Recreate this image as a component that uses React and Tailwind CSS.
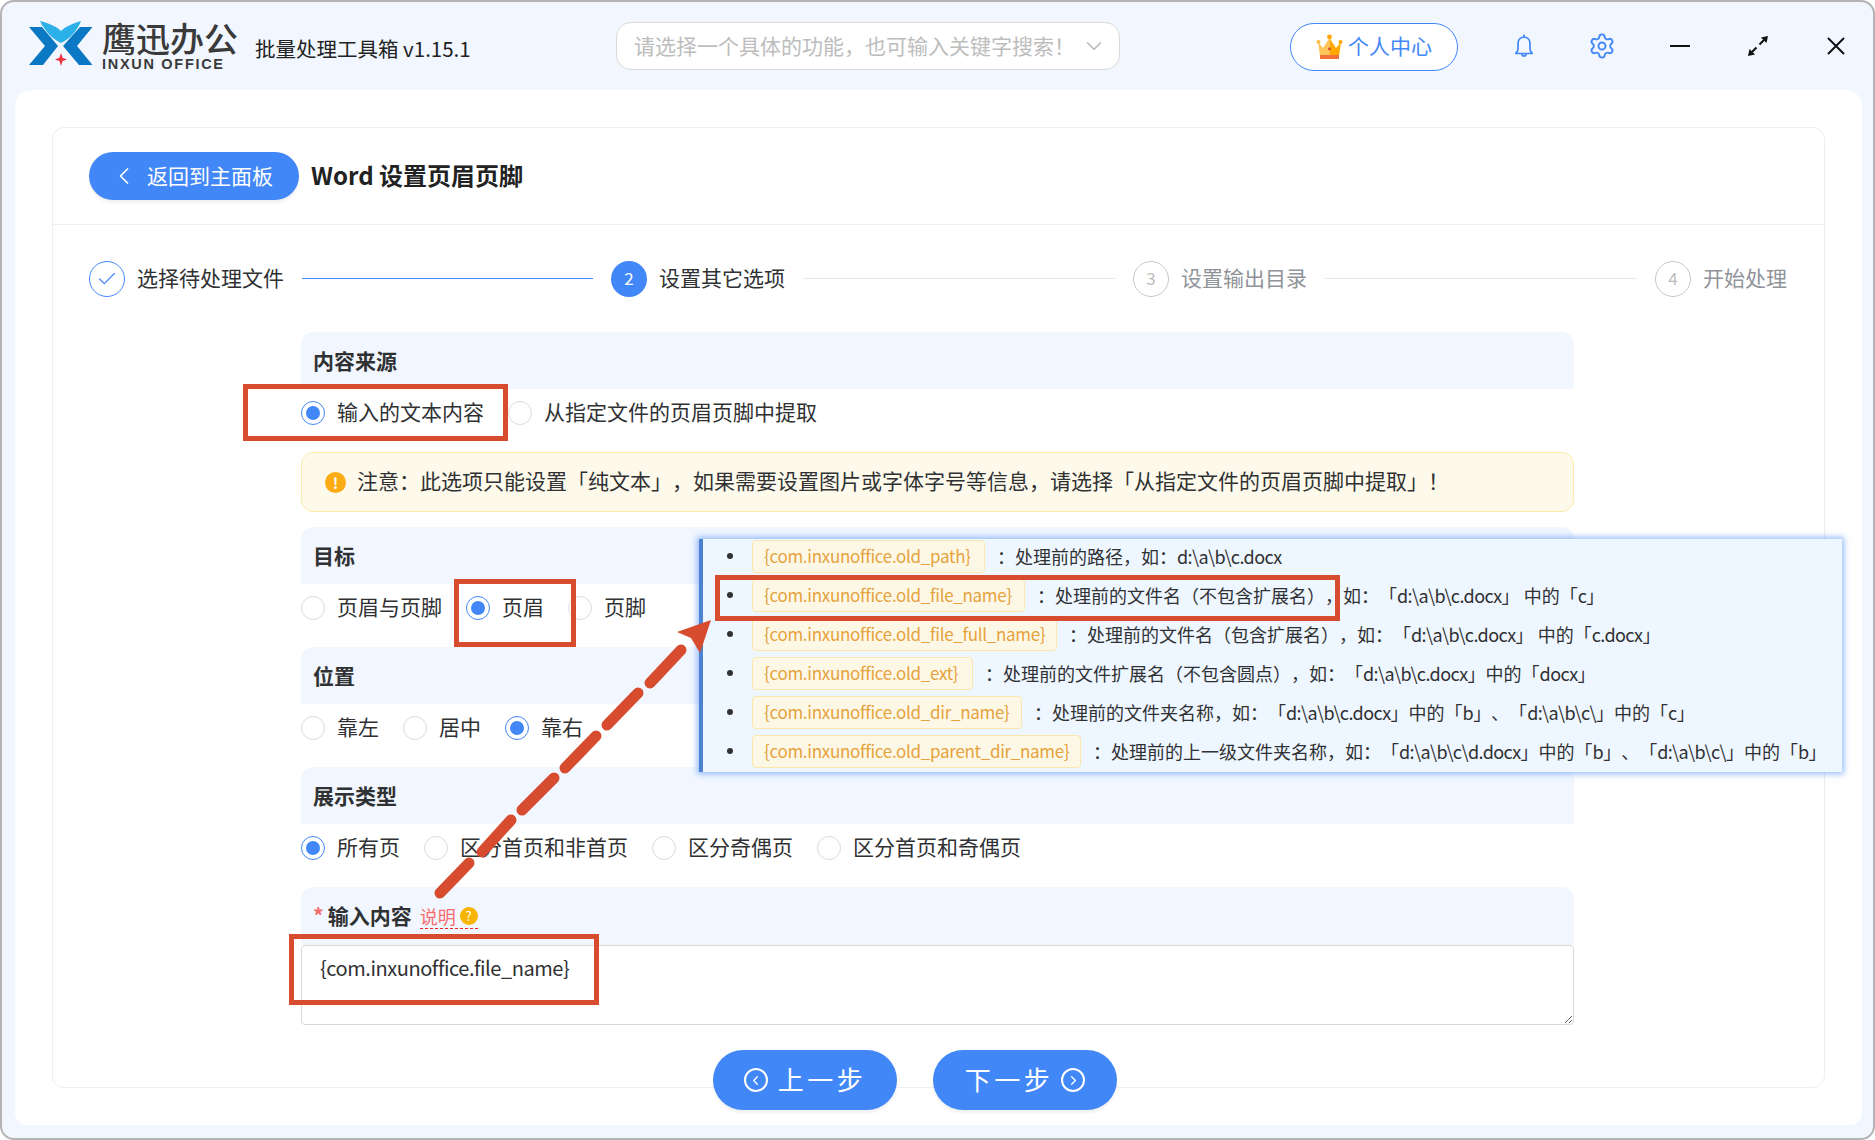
import { ChevronDown, ChevronLeft, ChevronRight, Check, Settings } from "lucide-react";

const SANS = "font-['Noto_Sans_CJK_SC','Noto_Sans',sans-serif]";

const VARS = [
  { name: "{com.inxunoffice.old_path}", w: "w-[233px]", desc: "：处理前的路径，如：d:\\a\\b\\c.docx" },
  { name: "{com.inxunoffice.old_file_name}", w: "w-[273px]", desc: "：处理前的文件名（不包含扩展名），如：「d:\\a\\b\\c.docx」 中的「c」" },
  { name: "{com.inxunoffice.old_file_full_name}", w: "w-[305px]", desc: "：处理前的文件名（包含扩展名），如：「d:\\a\\b\\c.docx」 中的「c.docx」" },
  { name: "{com.inxunoffice.old_ext}", w: "w-[221px]", desc: "：处理前的文件扩展名（不包含圆点），如：「d:\\a\\b\\c.docx」中的「docx」" },
  { name: "{com.inxunoffice.old_dir_name}", w: "w-[270px]", desc: "：处理前的文件夹名称，如：「d:\\a\\b\\c.docx」中的「b」、「d:\\a\\b\\c\\」中的「c」" },
  { name: "{com.inxunoffice.old_parent_dir_name}", w: "w-[329px]", desc: "：处理前的上一级文件夹名称，如：「d:\\a\\b\\c\\d.docx」中的「b」、「d:\\a\\b\\c\\」中的「b」" },
];

const DASHES = [
  [681, 650, 650, 683],
  [638, 693, 607, 725],
  [596, 736, 565, 768],
  [554, 778, 522, 810],
  [511, 820, 482, 852],
  [469, 863, 440, 893],
];

// latin runs sit tighter than the CJK around them
function Desc({ text }) {
  return (
    <span className="ml-3 text-[18px] text-[#303133]">
      {text.split(/([\x21-\x7e]+)/).map((part, i) =>
        i % 2 ? <span key={i} className="tracking-[-0.6px]">{part}</span> : part
      )}
    </span>
  );
}

function Radio({ label, checked, className = "" }) {
  return (
    <div className={`flex items-center gap-3 ${className}`}>
      {checked ? (
        <span className="flex h-6 w-6 items-center justify-center rounded-full border border-[#4287f7] bg-white">
          <span className="h-3.5 w-3.5 rounded-full bg-[#4287f7]" />
        </span>
      ) : (
        <span className="h-6 w-6 rounded-full border border-[#dcdcdc] bg-white" />
      )}
      <span className="mb-1 text-[21px] leading-none text-[#303133]">{label}</span>
    </div>
  );
}

function SectionTitle({ children }) {
  return (
    <div className="flex h-[57px] items-center rounded-t-xl bg-[#f2f7ff] pl-3 text-[21px] font-bold text-[#303133]">
      {children}
    </div>
  );
}

function Step({ index, label, state, line }) {
  return (
    <div className="flex items-center">
      {state === "done" && (
        <span className="flex h-9 w-9 items-center justify-center rounded-full border border-[#4287f7]">
          <Check size={22} strokeWidth={1.4} className="text-[#4287f7]" />
        </span>
      )}
      {state === "active" && (
        <span className="flex h-9 w-9 items-center justify-center rounded-full bg-[#4287f7] pb-[2px] text-[17px] text-white">{index}</span>
      )}
      {state === "todo" && (
        <span className="flex h-9 w-9 items-center justify-center rounded-full border border-[#c8c8c8] pb-[2px] text-[17px] text-[#bdbdbd]">{index}</span>
      )}
      <span className={`mb-[2px] ml-3 text-[21px] leading-none ${state === "todo" ? "text-[#909399]" : "text-[#303133]"}`}>{label}</span>
      {line && <span className={`mx-[18px] h-px ${line} ${state === "done" ? "bg-[#4287f7]" : "bg-[#e8e8e8]"}`} />}
    </div>
  );
}

function Logo() {
  return (
    <svg className="-mt-1" width="66" height="46" viewBox="0 0 66 46">
      <path d="M0 6H13L29 25L14 44H0L16 25Z" fill="#0a78c2" />
      <path d="M63.5 6H51L34 25L50 44H63.5L48 25Z" fill="#0a78c2" />
      <path d="M11 0C19 2 27 5 32 10C37 5 45 2 52 0C48 10 41 18 32 22C23 18 16 10 11 0Z" fill="#2bb0e8" />
      <path d="M32 32L33.6 36.8L38 38.4L33.6 40L32 45L30.4 40L26 38.4L30.4 36.8Z" fill="#ee3340" />
    </svg>
  );
}

function Crown() {
  return (
    <svg width="27" height="26" viewBox="0 0 27 26">
      <circle cx="2.5" cy="8" r="2" fill="#fdbd4a" />
      <circle cx="24.5" cy="8" r="2" fill="#ffa800" />
      <circle cx="13.5" cy="3" r="2.4" fill="#ffa800" />
      <path d="M2 8L7 14L13.5 4V22H4Z" fill="#fdc45c" />
      <path d="M25 8L20 14L13.5 4V22H23Z" fill="#ffa800" />
      <rect x="4" y="21" width="19" height="4" fill="#f2703a" />
      <circle cx="13.5" cy="15" r="1.4" fill="#d8452c" />
    </svg>
  );
}

function BellIcon() {
  return (
    <svg width="18" height="24" viewBox="0 0 18 24" fill="none" stroke="#4287f7" strokeWidth="1.7">
      <path d="M9 0.5V3" />
      <path d="M0.5 19.5H17.5C16 18.5 15 17 15 15V9A6 6 0 0 0 3 9V15C3 17 2 18.5 0.5 19.5Z" strokeLinejoin="round" />
      <path d="M7 20A2 2 0 0 0 11 20" />
    </svg>
  );
}

function Expand() {
  return (
    <svg width="20" height="20" viewBox="0 0 20 20" fill="none">
      <path d="M4 16L8.5 11.5M11.5 8.5L16 4" stroke="#111" strokeWidth="2" />
      <path d="M20 0L18.5 7L13 1.5Z" fill="#111" />
      <path d="M0 20L1.5 13L7 18.5Z" fill="#111" />
    </svg>
  );
}

export default function App() {
  return (
    <div className={`relative h-[1140px] w-[1875px] overflow-hidden bg-white [text-spacing-trim:space-all] ${SANS}`}>
      <div className="flex h-full flex-col rounded-[14px] border-2 border-[#b4b4b4] bg-[#f2f7ff]">
        {/* title bar */}
        <header className="flex h-[88px] shrink-0 items-center pl-[27px]">
          <Logo />
          <div className="ml-[7px] flex w-[140px] flex-col">
            <span className="text-[34px] font-medium leading-[32px] text-[#3a3a3a]">鹰迅办公</span>
            <span className="mt-[3px] font-['Liberation_Sans',sans-serif] text-[14.5px] font-bold leading-[14px] tracking-[1.7px] text-[#3a3a3a]">INXUN OFFICE</span>
          </div>
          <span className="ml-[13px] mt-1 w-[224px] whitespace-nowrap text-[20.5px] text-[#222]">批量处理工具箱 v1.15.1</span>
          <div className="ml-[137px] flex h-12 w-[504px] items-center justify-between rounded-[15px] border border-[#d9d9d9] bg-white pl-[17px] pr-[12px]">
            <span className="text-[21px] text-[#bdbdbd]">请选择一个具体的功能，也可输入关键字搜索！</span>
            <ChevronDown size={26} strokeWidth={1.3} className="text-[#b5b5b5]" />
          </div>
          <button className="ml-[170px] mt-[2px] flex h-12 w-[168px] items-center gap-[5px] rounded-full border border-[#4287f7] bg-white pl-[25px] text-[21px] text-[#4287f7]">
            <Crown />
            <span className="mb-[2px]">个人中心</span>
          </button>
          <div className="flex items-center">
            <span className="ml-[57px]"><BellIcon /></span>
            <Settings size={28} strokeWidth={1.6} className="ml-[55px] text-[#4287f7]" />
            <span className="ml-[54px] h-[2px] w-5 bg-[#111]" />
            <span className="ml-[58px]"><Expand /></span>
            <svg className="ml-[59px]" width="18" height="18" viewBox="0 0 18 18">
              <path d="M1 1L17 17M17 1L1 17" stroke="#111" strokeWidth="2" />
            </svg>
          </div>
        </header>

        {/* white panel */}
        <main className="ml-[13px] mr-[11px] h-[1035px] shrink-0 rounded-t-2xl rounded-b-xl bg-white px-[37px] pt-[37px]">
          <div className="relative h-[961px] rounded-xl border border-[#eeeeee]">
            <div className="flex h-[97px] items-center border-b border-[#eeeeee] pl-9">
              <button className="flex h-12 w-[210px] items-center rounded-full bg-[#4287f7] pl-[21px] text-[21px] text-white shadow-[0_3px_3px_rgba(0,0,0,0.06)]">
                <ChevronLeft size={28} strokeWidth={1.5} className="mr-[9px]" />
                返回到主面板
              </button>
              <h1 className="mb-[2px] ml-3 text-[24px] font-bold text-[#222]">Word 设置页眉页脚</h1>
            </div>

            <div className="flex h-[107px] items-center pl-9">
              <Step index="1" label="选择待处理文件" state="done" line="w-[291px]" />
              <Step index="2" label="设置其它选项" state="active" line="w-[312px]" />
              <Step index="3" label="设置输出目录" state="todo" line="w-[312px]" />
              <Step index="4" label="开始处理" state="todo" />
            </div>

            <div className="ml-[248px] w-[1273px]">
              <SectionTitle>内容来源</SectionTitle>
              <div className="flex h-[63px] items-center pb-[15px]">
                <Radio label="输入的文本内容" checked className="w-[207px]" />
                <Radio label="从指定文件的页眉页脚中提取" />
              </div>
              <div className="flex h-[60px] items-center rounded-xl border border-[#fde9a8] bg-[#fefaeb] pl-[23px]">
                <span className="flex h-[21px] w-[21px] items-center justify-center rounded-full bg-[#fbac14] text-[15px] font-bold leading-none text-white">!</span>
                <span className="mb-[2px] ml-[11px] whitespace-nowrap text-[21px] text-[#303133]">注意：此选项只能设置「纯文本」，如果需要设置图片或字体字号等信息，请选择「从指定文件的页眉页脚中提取」！</span>
              </div>

              <div className="mt-[15px]">
                <SectionTitle>目标</SectionTitle>
              </div>
              <div className="flex h-[63px] items-center gap-6 pb-[15px]">
                <Radio label="页眉与页脚" />
                <Radio label="页眉" checked />
                <Radio label="页脚" />
              </div>

              <SectionTitle>位置</SectionTitle>
              <div className="flex h-[63px] items-center gap-6 pb-[15px]">
                <Radio label="靠左" />
                <Radio label="居中" />
                <Radio label="靠右" checked />
              </div>

              <SectionTitle>展示类型</SectionTitle>
              <div className="flex h-[63px] items-center gap-6 pb-[15px]">
                <Radio label="所有页" checked />
                <Radio label="区分首页和非首页" />
                <Radio label="区分奇偶页" />
                <Radio label="区分首页和奇偶页" />
              </div>

              <div className="flex h-[58px] items-center rounded-t-xl bg-[#f2f7ff] pl-3 text-[21px]">
                <span className="mr-1 font-bold text-[#f56c6c]">*</span>
                <span className="font-bold text-[#303133]">输入内容</span>
                <span className="ml-2 flex items-center gap-1 border-b border-dashed border-[#ee2222] text-[18px] leading-[24px] text-[#f56c6c]">
                  说明
                  <span className="flex h-[18px] w-[18px] items-center justify-center rounded-full bg-[#f7b500] text-[13px] leading-none text-white">?</span>
                </span>
              </div>
              <textarea
                readOnly
                value="{com.inxunoffice.file_name}"
                className="block h-[80px] w-full resize-y rounded border border-[#d8d8d8] bg-white px-[18px] py-[7px] text-[20px] leading-[30px] tracking-[-0.45px] text-[#303133] outline-none"
              />
            </div>

            <div className="absolute left-[660px] top-[922px] flex gap-[36px]">
              <button className="flex h-[60px] w-[184px] items-center justify-center gap-[10px] rounded-full bg-[#4287f7] text-[26px] tracking-[3.5px] text-white shadow-[0_3px_3px_rgba(0,0,0,0.06)]">
                <span className="flex h-6 w-6 items-center justify-center rounded-full border-2 border-white">
                  <ChevronLeft size={15} strokeWidth={2} />
                </span>
                <span className="mb-1">上一步</span>
              </button>
              <button className="flex h-[60px] w-[184px] items-center justify-center gap-[8px] rounded-full bg-[#4287f7] text-[26px] tracking-[3.5px] text-white shadow-[0_3px_3px_rgba(0,0,0,0.06)]">
                <span className="mb-1">下一步</span>
                <span className="flex h-6 w-6 items-center justify-center rounded-full border-2 border-white">
                  <ChevronRight size={15} strokeWidth={2} />
                </span>
              </button>
            </div>
          </div>
        </main>
      </div>

      {/* tip popup laid over the form */}
      <div className="absolute left-[699px] top-[539px] flex h-[233px] w-[1143px] flex-col border-l-4 border-[#4d81d1] bg-[#eef6ff] shadow-[0_0_6px_2px_rgba(66,135,247,0.55)]">
        {VARS.map((v) => (
          <div key={v.name} className="flex h-[39px] shrink-0 items-center whitespace-nowrap pb-[5px] pl-[24px]">
            <span className="h-[6px] w-[6px] rounded-full bg-[#303133]" />
            <span className={`ml-[19px] flex h-[33px] shrink-0 ${v.w} items-center rounded border border-[#fbe7ae] bg-[#fdf8e6] pl-[11px] text-[17px] tracking-[-0.3px] text-[#e6a23c]`}>{v.name}</span>
            <Desc text={v.desc} />
          </div>
        ))}
      </div>

      {/* red annotations */}
      <div className="absolute left-[243px] top-[384px] h-[57px] w-[265px] border-[5px] border-[#d74b2f]" />
      <div className="absolute left-[454px] top-[579px] h-[68px] w-[122px] border-[5px] border-[#d74b2f]" />
      <div className="absolute left-[289px] top-[934px] h-[71px] w-[310px] border-[5px] border-[#d74b2f]" />
      <div className="absolute left-[715px] top-[575px] h-[46px] w-[625px] border-[5px] border-[#d74b2f]" />
      <svg className="absolute left-0 top-0" width="1875" height="1140" viewBox="0 0 1875 1140" fill="none">
        {DASHES.map(([x1, y1, x2, y2]) => (
          <line key={y1} x1={x1} y1={y1} x2={x2} y2={y2} stroke="#d74b2f" strokeWidth="11" strokeLinecap="round" />
        ))}
        <path d="M711 620L677 632L691 638L700 653Z" fill="#d74b2f" />
      </svg>
    </div>
  );
}
